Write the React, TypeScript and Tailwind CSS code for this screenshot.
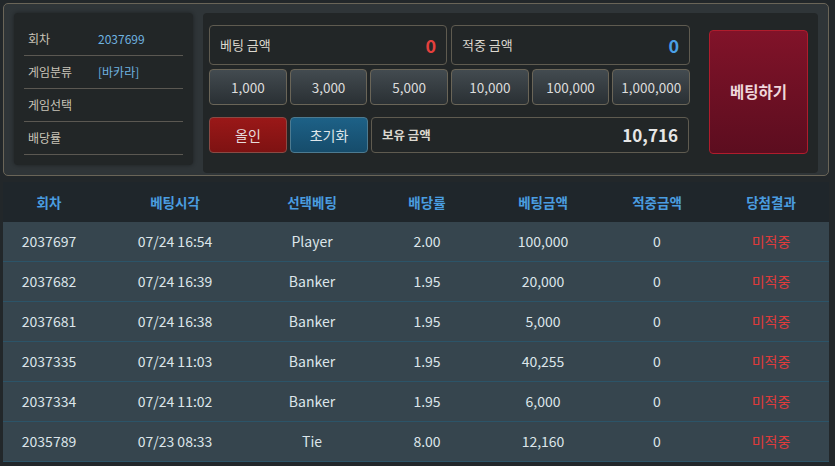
import React from 'react';

const font = { fontFamily: '"Noto Sans CJK KR", "Noto Sans", sans-serif' };

const chips = ['1,000', '3,000', '5,000', '10,000', '100,000', '1,000,000'];

const rows = [
  ['2037697', '07/24 16:54', 'Player', '2.00', '100,000', '0'],
  ['2037682', '07/24 16:39', 'Banker', '1.95', '20,000', '0'],
  ['2037681', '07/24 16:38', 'Banker', '1.95', '5,000', '0'],
  ['2037335', '07/24 11:03', 'Banker', '1.95', '40,255', '0'],
  ['2037334', '07/24 11:02', 'Banker', '1.95', '6,000', '0'],
  ['2035789', '07/23 08:33', 'Tie', '8.00', '12,160', '0'],
];

const headers = ['회차', '베팅시각', '선택베팅', '배당률', '베팅금액', '적중금액', '당첨결과'];
const cols = 'grid grid-cols-[92px_160px_114px_116px_116px_112px_116px]';

const App: React.FC = () => {
  return (
    <div className="w-[835px] h-[466px] overflow-hidden bg-[#22272a] pt-[3px] pl-[3px]" style={font}>
      <div className="w-[826px] h-[173px] border border-[#6a6558] rounded-[5px] bg-[#2f3538] flex pl-[10px] pt-[9px]">
        <div className="w-[179px] h-[152px] bg-[#222627] rounded-[4px] px-[10px] pt-[10px] shadow-[0_0_4px_rgba(0,0,0,0.4)]">
          {[
            ['회차', '2037699'],
            ['게임분류', '[바카라]'],
            ['게임선택', ''],
            ['배당률', ''],
          ].map(([k, v]) => (
            <div key={k} className="h-[33px] flex items-center border-b border-[#5b5852] text-[12px]">
              <span className="w-[74px] pl-[4px] text-[#c9c4b8]">{k}</span>
              <span className="text-[#6fb3e0]">{v}</span>
            </div>
          ))}
        </div>
        <div className="ml-[10px] w-[615px] h-[160px] bg-[#222627] rounded-[4px] flex pl-[6px] pt-[12px]">
          <div className="w-[481px] flex flex-col">
            <div className="flex gap-[4px]">
              <div className="w-[238px] h-[40px] border border-[#5f5b50] rounded-[4px] flex items-center justify-between px-[10px]">
                <span className="text-[13px] text-[#dcd8cf]">베팅 금액</span>
                <span className="text-[18px] font-bold text-[#e5403d]">0</span>
              </div>
              <div className="w-[239px] h-[40px] border border-[#5f5b50] rounded-[4px] flex items-center justify-between px-[10px]">
                <span className="text-[13px] text-[#dcd8cf]">적중 금액</span>
                <span className="text-[18px] font-bold text-[#4aa0e6]">0</span>
              </div>
            </div>
            <div className="flex gap-[3px] mt-[4px]">
              {chips.map((c) => (
                <div
                  key={c}
                  className="w-[78px] h-[36px] border border-[#6a6558] rounded-[4px] bg-gradient-to-b from-[#434b50] to-[#2a3034] flex items-center justify-center text-[13.5px] text-[#dcdcdc]"
                >
                  {c}
                </div>
              ))}
            </div>
            <div className="flex gap-[3px] mt-[12px]">
              <div className="w-[78px] h-[36px] border border-[#8a4a44] rounded-[4px] bg-gradient-to-b from-[#9a1818] to-[#7e1212] flex items-center justify-center text-[14px] text-[#e6dcdc]">
                올인
              </div>
              <div className="w-[78px] h-[36px] border border-[#4d7a90] rounded-[4px] bg-gradient-to-b from-[#1d6187] to-[#164c6b] flex items-center justify-center text-[14px] text-[#dfe6ea]">
                초기화
              </div>
              <div className="w-[318px] h-[36px] border border-[#5f5b50] rounded-[4px] flex items-center justify-between px-[10px]">
                <span className="text-[12.5px] font-bold text-[#dcd8cf]">보유 금액</span>
                <span className="text-[17px] font-bold text-[#e6e6e6]">10,716</span>
              </div>
            </div>
          </div>
          <div className="ml-[19px] mt-[5px] w-[99px] h-[124px] rounded-[4px] border border-[#b01c2c] bg-gradient-to-b from-[#811329] to-[#5c0d1f] flex items-center justify-center text-[15.5px] font-bold text-[#efd8dc]">
            베팅하기
          </div>
        </div>
      </div>
      <div className="mt-[6px] w-[826px] bg-[#1f262b]">
        <div className={`${cols} h-[40px] items-center text-[13.5px] font-bold text-[#4a9de0]`}>
          {headers.map((h) => (
            <div key={h} className="text-center">{h}</div>
          ))}
        </div>
        {rows.map((r) => (
          <div key={r[0]} className={`${cols} h-[40px] items-center bg-[#36454e] border-b border-[#2c5468] text-[14px] text-[#dde5ea]`}>
            {r.map((c, i) => (
              <div key={i} className="text-center">{c}</div>
            ))}
            <div className="text-center text-[#e03b3b]">미적중</div>
          </div>
        ))}
      </div>
    </div>
  );
};

export default App;
